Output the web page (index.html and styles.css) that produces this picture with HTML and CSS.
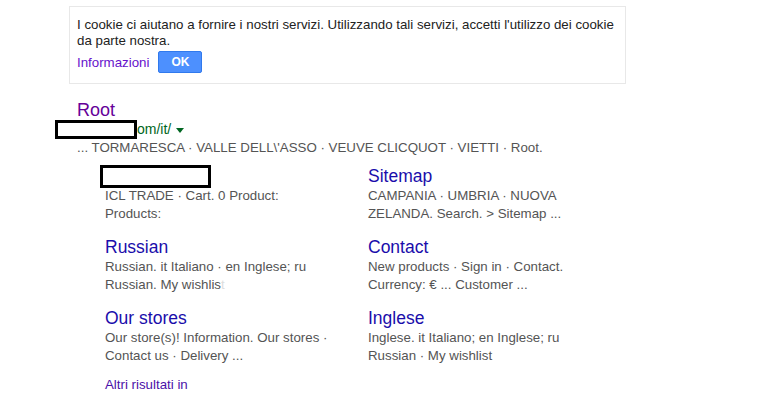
FILE: index.html
```html
<!DOCTYPE html>
<html lang="it">
<head>
<meta charset="utf-8">
<link rel="stylesheet" href="styles.css">
</head>
<body>
<div class="cookie">
  <div class="cookie-text">I cookie ci aiutano a fornire i nostri servizi. Utilizzando tali servizi, accetti l'utilizzo dei cookie da parte nostra.</div>
  <div class="cookie-actions">
    <a class="info">Informazioni</a>
    <span class="ok">OK</span>
  </div>
</div>
<div class="result">
  <h3 class="title visited">Root</h3>
  <div class="url"><span class="redact redact-url"></span>om/it/ <span class="arrow"></span></div>
  <div class="snippet">... TORMARESCA · VALLE DELL\'ASSO · VEUVE CLICQUOT · VIETTI · Root.</div>
  <div class="sitelinks">
    <div class="sl">
      <h4 class="sl-title"><span class="redact redact-title"></span>&nbsp;</h4>
      <div class="sl-text">ICL TRADE · Cart. 0 Product:<br>Products:</div>
    </div>
    <div class="sl">
      <h4 class="sl-title">Sitemap</h4>
      <div class="sl-text">CAMPANIA · UMBRIA · NUOVA<br>ZELANDA. Search. &gt; Sitemap ...</div>
    </div>
    <div class="sl">
      <h4 class="sl-title">Russian</h4>
      <div class="sl-text">Russian. it Italiano · en Inglese; ru<br>Russian. My wishlis<span class="cut">t</span></div>
    </div>
    <div class="sl">
      <h4 class="sl-title">Contact</h4>
      <div class="sl-text">New products · Sign in · Contact.<br>Currency: € ... Customer ...</div>
    </div>
    <div class="sl">
      <h4 class="sl-title">Our stores</h4>
      <div class="sl-text">Our store(s)! Information. Our stores ·<br>Contact us · Delivery ...</div>
    </div>
    <div class="sl">
      <h4 class="sl-title">Inglese</h4>
      <div class="sl-text">Inglese. it Italiano; en Inglese; ru<br>Russian · My wishlist</div>
    </div>
  </div>
  <a class="more">Altri risultati in</a>
</div>
</body>
</html>
```
FILE: styles.css
```css
html, body {
  margin: 0;
  padding: 0;
  background: #fff;
  font-family: "Liberation Sans", Arial, sans-serif;
}
.cookie {
  margin: 6px 0 0 69px;
  width: 541px;
  height: 62px;
  border: 1px solid #e8e8e8;
  padding: 10px 7px 4px 7px;
  font-size: 13.3px;
  color: #222;
}
.cookie-text {
  line-height: 16px;
}
.cookie-actions {
  display: flex;
  align-items: center;
  margin-top: 2px;
}
.info {
  color: #6611cc;
  margin-right: 9px;
}
.ok {
  display: inline-block;
  width: 42px;
  height: 20px;
  line-height: 20px;
  text-align: center;
  background: #4d90fe;
  border: 1px solid #3079ed;
  border-radius: 2px;
  color: #fff;
  font-weight: bold;
  font-size: 12px;
}
.result {
  margin: 15px 0 0 77px;
}
.title {
  margin: 0;
  font-size: 18px;
  font-weight: normal;
  line-height: 22px;
}
.visited { color: #660099; }
.url {
  font-size: 14px;
  line-height: 17px;
  color: #006621;
}
.arrow {
  display: inline-block;
  width: 0;
  height: 0;
  border-left: 4px solid transparent;
  border-right: 4px solid transparent;
  border-top: 5px solid #006621;
  vertical-align: middle;
  margin-left: 1px;
}
.redact {
  background: #fff;
  border: 3px solid #000;
  box-sizing: border-box;
}
.redact-url {
  display: inline-block;
  vertical-align: top;
  margin: -1px 0 0 -22px;
  width: 82px;
  height: 19px;
}
.snippet {
  font-size: 13.3px;
  line-height: 18px;
  color: #545454;
}
.sitelinks {
  display: grid;
  grid-template-columns: 263px 263px;
  row-gap: 14px;
  margin: 9px 0 0 28px;
}
.sl-title {
  position: relative;
  margin: 0;
  font-size: 17.5px;
  font-weight: normal;
  line-height: 21px;
  color: #1a0dab;
}
.redact-title {
  position: absolute;
  left: -5px;
  top: -1px;
  width: 111px;
  height: 23px;
}
.sl-text {
  font-size: 13.3px;
  line-height: 18px;
  color: #545454;
}
.cut { color: #ddd; }
.more {
  display: block;
  margin: 11px 0 0 28px;
  font-size: 13.3px;
  line-height: 18px;
  color: #4b11a8;
}
```
